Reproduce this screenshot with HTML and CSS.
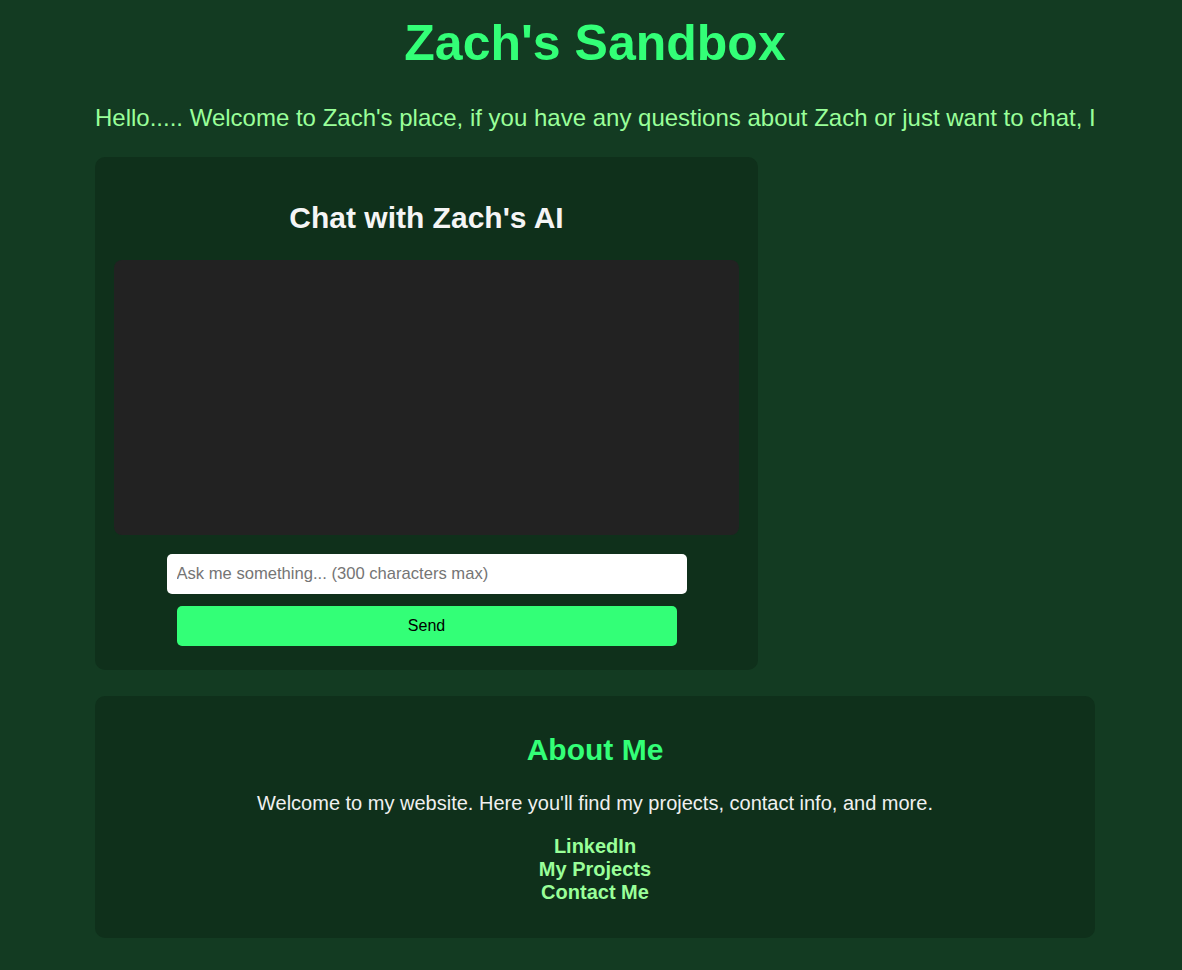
FILE: index.html
```html
<!DOCTYPE html>
<html lang="en">
<head>
<meta charset="utf-8">
<title>Zach's Sandbox</title>
<link rel="stylesheet" href="styles.css">
</head>
<body>
<header class="site-header">
  <h1 class="site-title">Zach's Sandbox</h1>
</header>
<main class="page">
  <p class="intro">Hello..... Welcome to Zach's place, if you have any questions about Zach or just want to chat, I</p>
  <section class="card chat-card">
    <h2 class="chat-title">Chat with Zach's AI</h2>
    <div class="chat-box"></div>
    <form class="chat-form">
      <input class="chat-input" type="text" maxlength="300" placeholder="Ask me something... (300 characters max)">
      <button class="chat-send" type="button">Send</button>
    </form>
  </section>
  <section class="card about-card">
    <h2 class="about-title">About Me</h2>
    <p class="about-text">Welcome to my website. Here you'll find my projects, contact info, and more.</p>
    <nav class="about-links">
      <a href="#">LinkedIn</a>
      <a href="#">My Projects</a>
      <a href="#">Contact Me</a>
    </nav>
  </section>
</main>
</body>
</html>
```
FILE: styles.css
```css
html, body {
  margin: 0;
  padding: 0;
}
body {
  padding-left: 8px;
  background: #133b22;
  font-family: "Liberation Sans", Arial, sans-serif;
  color: #f0f0f0;
}
.site-header {
  padding-top: 14px;
  text-align: center;
}
.site-title {
  margin: 0;
  font-size: 50px;
  line-height: 58px;
  color: #33ff77;
  font-weight: bold;
}
.page {
  width: 1000px;
  margin: 0 auto;
}
.intro {
  margin: 32px 0 0;
  font-size: 24px;
  line-height: 28px;
  color: #99ff99;
  white-space: nowrap;
  overflow: hidden;
}
.card {
  background: #0f301b;
  border-radius: 10px;
  box-sizing: border-box;
}
.chat-card {
  margin-top: 25px;
  width: 663px;
  padding: 44px 19px 24px;
  text-align: center;
}
.chat-title {
  margin: 0;
  font-size: 30px;
  line-height: 34px;
  color: #f5f5f5;
}
.chat-box {
  margin-top: 25px;
  height: 275px;
  background: #222222;
  border-radius: 8px;
}
.chat-form {
  margin-top: 19px;
  display: flex;
  flex-direction: column;
  align-items: center;
  gap: 12px;
}
.chat-input {
  width: 520px;
  height: 40px;
  box-sizing: border-box;
  border: none;
  border-radius: 5px;
  padding: 0 10px;
  font-family: inherit;
  font-size: 16.6px;
  background: #ffffff;
}
.chat-input::placeholder {
  color: #757575;
}
.chat-send {
  width: 500px;
  height: 40px;
  border: none;
  border-radius: 5px;
  background: #33ff77;
  color: #000;
  font-family: inherit;
  font-size: 16px;
}
.about-card {
  margin-top: 26px;
  padding: 37px 20px 34px;
  text-align: center;
}
.about-title {
  margin: 0;
  font-size: 30px;
  line-height: 34px;
  color: #33ff77;
}
.about-text {
  margin: 24px 0 0;
  font-size: 20px;
  line-height: 24px;
  color: #f0f0f0;
}
.about-links {
  margin-top: 20px;
  display: flex;
  flex-direction: column;
  align-items: center;
}
.about-links a {
  font-size: 20px;
  line-height: 23px;
  font-weight: bold;
  color: #99ff99;
  text-decoration: none;
}
```
